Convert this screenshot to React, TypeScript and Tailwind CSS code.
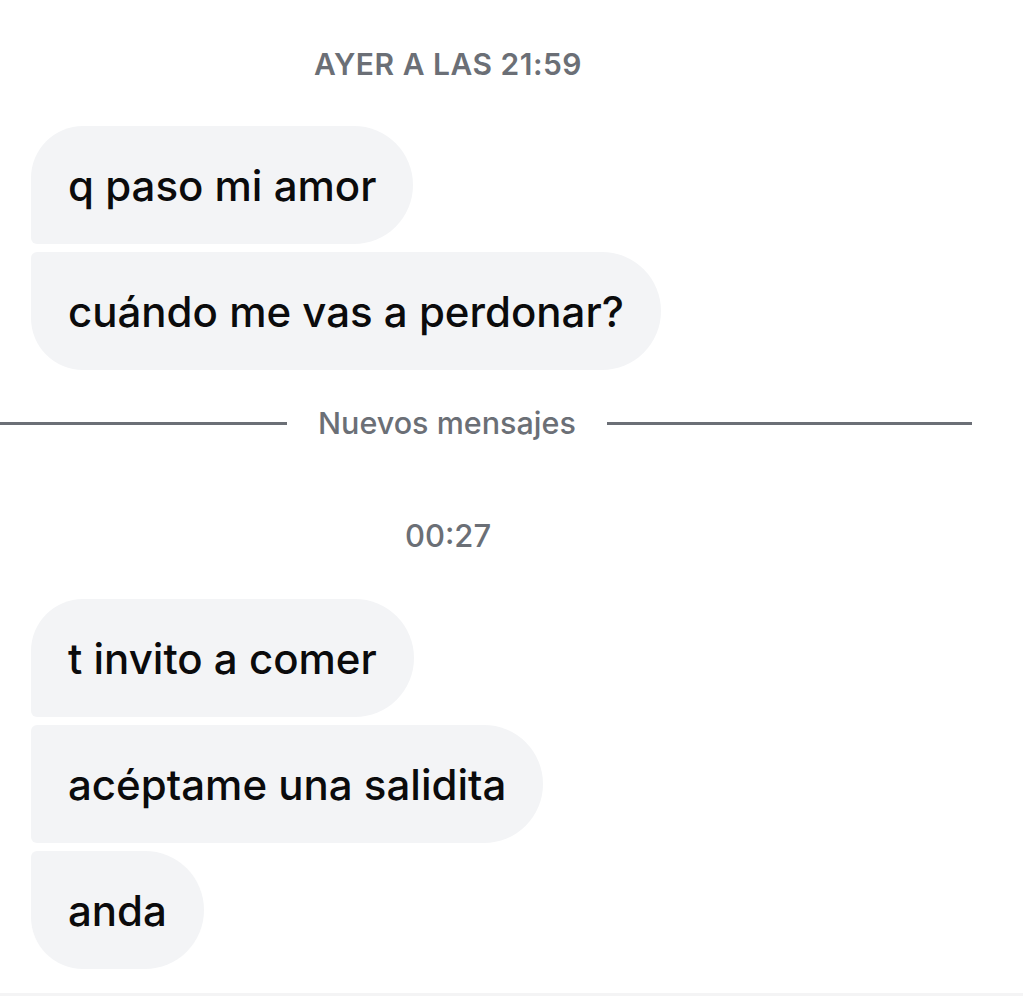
import React from "react";

type Pos = "first" | "middle" | "last";

const font = { fontFamily: "Inter, 'Noto Sans', sans-serif" };

function bubbleCorners(pos: Pos) {
  switch (pos) {
    case "first":
      return "rounded-tl-[52px] rounded-bl-[6px]";
    case "middle":
      return "rounded-tl-[6px] rounded-bl-[6px]";
    case "last":
      return "rounded-tl-[6px] rounded-bl-[52px]";
  }
}

function Bubble({ text, pos }: { text: string; pos: Pos }) {
  return (
    <div
      className={`ml-[31px] flex h-[118px] w-fit items-center rounded-r-[59px] bg-[#f3f4f6] pl-[37px] pr-[37px] text-[42px] font-medium tracking-[0px] text-[#0b0b0c] ${bubbleCorners(pos)}`}
    >
      {text}
    </div>
  );
}

export default function App() {
  return (
    <div className="min-h-screen w-full overflow-hidden bg-white" style={font}>
      <div className="w-[896px]">
        <p className="pt-[48px] text-center text-[30px] font-semibold leading-[32px] tracking-[0.5px] text-[#6b6f76]">
          AYER A LAS 21:59
        </p>

        <div className="mt-[46px] flex flex-col gap-[8px]">
          <Bubble text="q paso mi amor" pos="first" />
          <Bubble text="cuándo me vas a perdonar?" pos="last" />
        </div>
      </div>

      <div className="mt-[36px] flex w-[972px] items-center">
        <div className="h-[3px] w-[287px] bg-[#6b6f76]" />
        <span className="px-[31px] text-[30.5px] font-medium leading-[34px] text-[#6b6f76]">
          Nuevos mensajes
        </span>
        <div className="h-[3px] flex-1 bg-[#6b6f76]" />
      </div>

      <div className="w-[896px]">
        <p className="mt-[80px] text-center text-[31px] font-medium leading-[32px] text-[#6b6f76]">
          00:27
        </p>

        <div className="mt-[47px] flex flex-col gap-[8px]">
          <Bubble text="t invito a comer" pos="first" />
          <Bubble text="acéptame una salidita" pos="middle" />
          <Bubble text="anda" pos="last" />
        </div>
      </div>

      <div className="mt-[24px] h-[3px] w-full bg-[#f4f4f5]" />
    </div>
  );
}
